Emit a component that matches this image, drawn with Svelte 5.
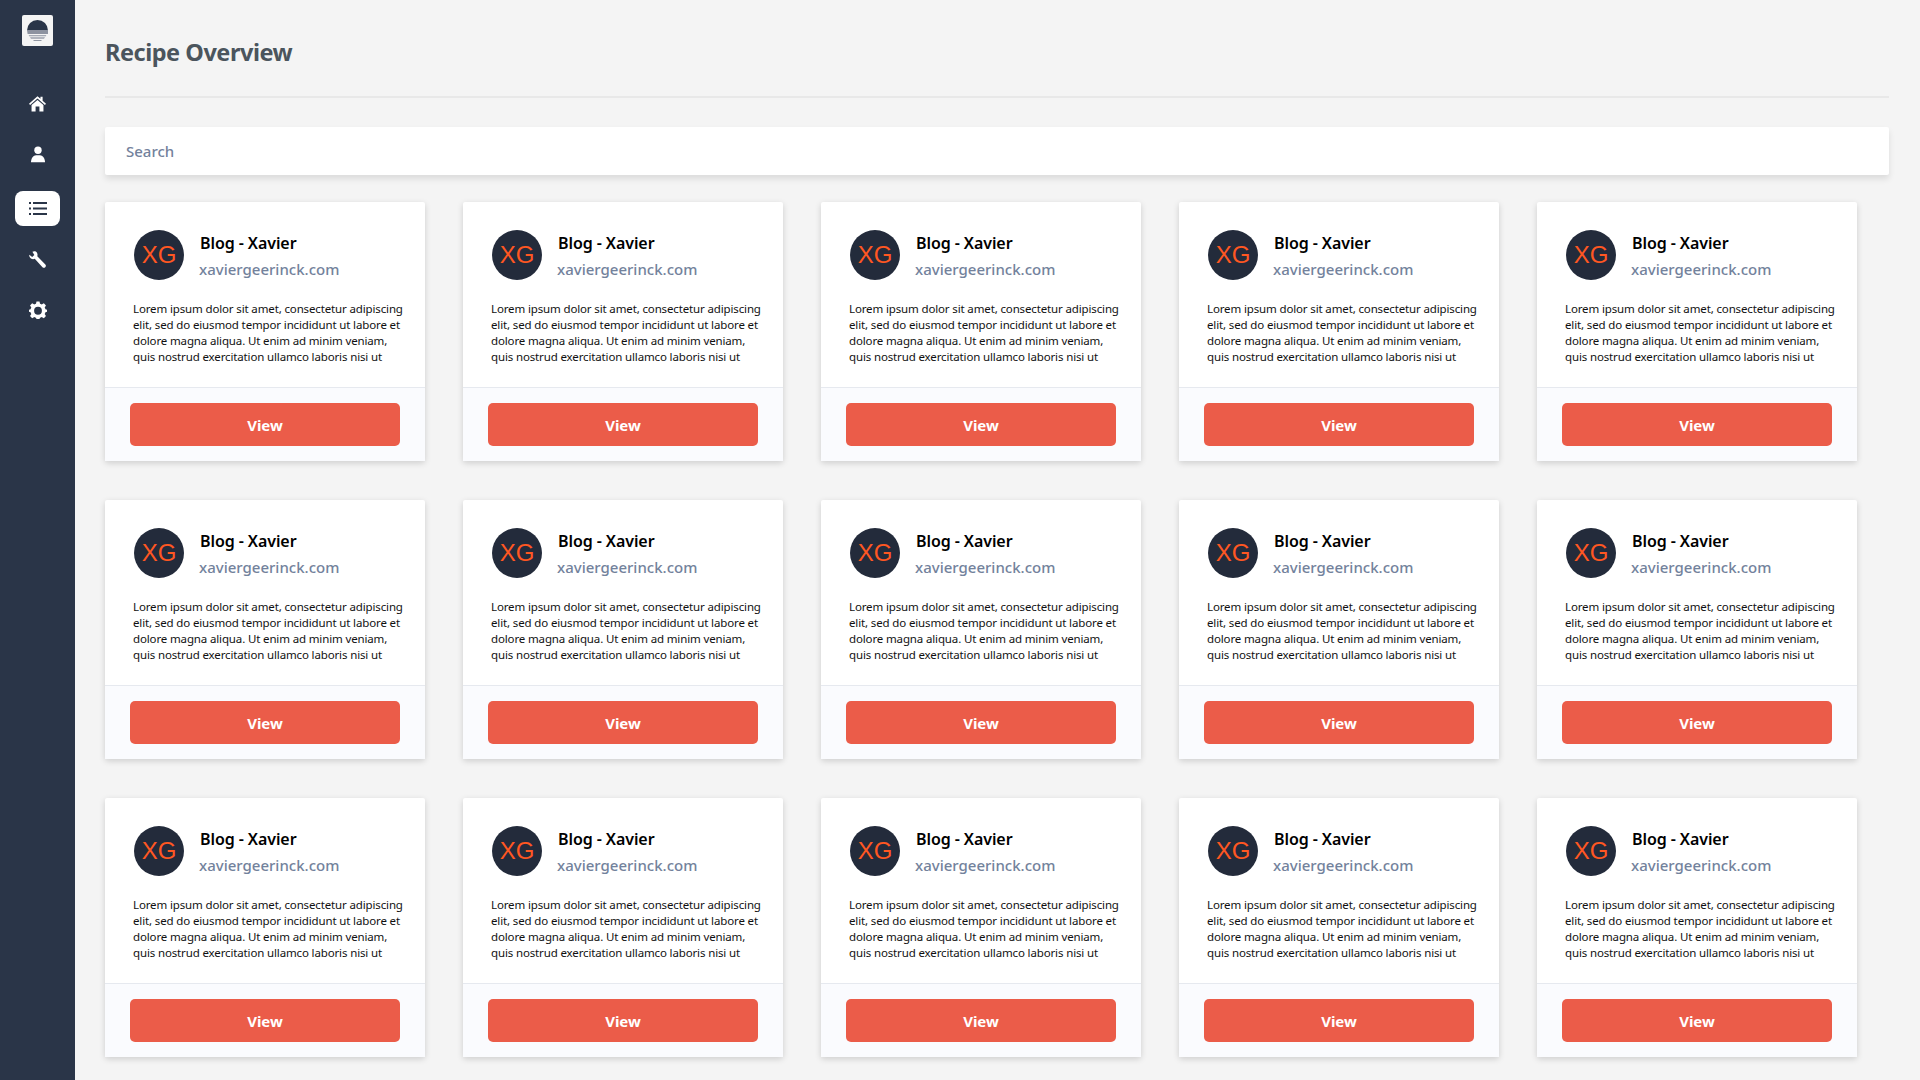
<script>
  const cards = Array.from({ length: 15 }, (_, i) => i);
</script>

<div class="layout">
  <nav class="sidebar">
    <div class="logo">
      <svg viewBox="0 0 21 21" width="21" height="21">
        <path d="M0 10.5 A10.5 10.5 0 0 1 21 10.5 Z" fill="#2a3548" />
        <path d="M0 10 H21 V14 H.6 Z" fill="#8d93a0" />
        <path d="M1.6 15.2 H19.4 L18.8 16.2 H2.2 Z" fill="#8d93a0" />
        <path d="M3 17.6 H18 L17 18.6 H4 Z" fill="#6f7787" />
        <path d="M6 20 H15 L14 20.8 H7 Z" fill="#6f7787" />
      </svg>
    </div>
    <a class="nav-item home" href="#home" aria-label="Home">
      <svg viewBox="0 0 16 16" width="17" height="17"><path fill="#fff" d="M8 1.2 L10.8 3.6 V1.6 H12.8 V5.4 L16 8.2 L15 9.4 L8 3.4 L1 9.4 L0 8.2 Z M2.4 9.4 L8 4.6 L13.6 9.4 V15.6 H9.8 V10.8 H6.2 V15.6 H2.4 Z" /></svg>
    </a>
    <a class="nav-item user" href="#user" aria-label="User">
      <svg viewBox="0 0 16 16" width="16" height="17"><circle fill="#fff" cx="8" cy="3.8" r="3.7" /><path fill="#fff" d="M1 15.8 C1 11.8 3.4 8.8 6 8.8 H10 C12.6 8.8 15 11.8 15 15.8 Z" /></svg>
    </a>
    <a class="nav-item active" href="#list" aria-label="Recipes">
      <svg viewBox="0 0 18 15" width="18" height="15"><g fill="#2a3548"><rect x="0" y="1" width="2" height="2" /><rect x="4" y="1" width="14" height="2" /><rect x="0" y="6.5" width="2" height="2" /><rect x="4" y="6.5" width="14" height="2" /><rect x="0" y="12" width="2" height="2" /><rect x="4" y="12" width="14" height="2" /></g></svg>
    </a>
    <a class="nav-item wrench" href="#tools" aria-label="Tools">
      <svg viewBox="0 0 16 16" width="17" height="17"><path fill="#fff" d="M0.3 3.6 L3 5.6 L5 3.8 L3.2 0.8 C5 -0.2 7 0.4 7.7 2 C8.2 3.2 8 4 7.8 4.9 L15.4 12.6 C16.2 13.5 16 14.6 15.3 15.3 C14.5 16 13.4 16 12.7 15.2 L5.4 7.4 C4.4 7.8 3 7.9 1.8 7 C0.6 6.2 0 5 0.3 3.6 Z" /></svg>
    </a>
    <a class="nav-item gear" href="#settings" aria-label="Settings">
      <svg viewBox="0 0 24 24" width="18" height="18"><path fill="#fff" fill-rule="evenodd" d="M10 0.5 H14 L14.7 3.7 C15.5 4 16.2 4.3 16.9 4.8 L19.8 3.1 L22.6 5.9 L20.9 8.8 C21.3 9.5 21.7 10.3 21.9 11.1 L24 11.7 V14.3 L21.9 14.9 C21.7 15.7 21.3 16.5 20.9 17.2 L22.6 20.1 L19.8 22.9 L16.9 21.2 C16.2 21.7 15.5 22 14.7 22.3 L14 24 H10 L9.3 22.3 C8.5 22 7.8 21.7 7.1 21.2 L4.2 22.9 L1.4 20.1 L3.1 17.2 C2.7 16.5 2.3 15.7 2.1 14.9 L0 14.3 V11.7 L2.1 11.1 C2.3 10.3 2.7 9.5 3.1 8.8 L1.4 5.9 L4.2 3.1 L7.1 4.8 C7.8 4.3 8.5 4 9.3 3.7 Z M12 7.8 A5.2 5.2 0 1 0 12 18.2 A5.2 5.2 0 1 0 12 7.8 Z" /></svg>
    </a>
  </nav>

  <main class="main">
    <h1>Recipe Overview</h1>
    <div class="search">Search</div>
    <div class="grid">
      {#each cards as c (c)}
        <article class="card">
          <div class="body">
            <header class="head">
              <div class="avatar">XG</div>
              <div class="who">
                <div class="name">Blog - Xavier</div>
                <div class="site">xaviergeerinck.com</div>
              </div>
            </header>
            <p>Lorem ipsum dolor sit amet, consectetur adipiscing<br />elit, sed do eiusmod tempor incididunt ut labore et<br />dolore magna aliqua. Ut enim ad minim veniam,<br />quis nostrud exercitation ullamco laboris nisi ut</p>
          </div>
          <footer class="foot"><button type="button">View</button></footer>
        </article>
      {/each}
    </div>
  </main>
</div>

<style>
  :global(body) {
    margin: 0;
    background: #f4f4f4;
    font-family: "Noto Sans", "Open Sans", sans-serif;
    overflow: hidden;
  }
  .layout {
    display: flex;
    height: 1080px;
    overflow: hidden;
  }
  .sidebar {
    width: 75px;
    flex: none;
    background: #2a3548;
    display: flex;
    flex-direction: column;
    align-items: center;
    padding-top: 15px;
    box-sizing: border-box;
  }
  .logo {
    width: 31px;
    height: 31px;
    background: #f4f4f4;
    border-radius: 2px;
    display: flex;
    align-items: center;
    justify-content: center;
    margin-bottom: 40px;
  }
  .nav-item {
    width: 45px;
    height: 35px;
    display: flex;
    align-items: center;
    justify-content: center;
    margin-bottom: 16px;
    border-radius: 8px;
  }
  .nav-item svg { display: block; }
  .nav-item.user { margin-bottom: 19px; }
  .nav-item.wrench { margin-bottom: 15px; }
  .nav-item.active { background: #fff; }
  .main {
    flex: 1;
    min-width: 0;
    padding: 0 31px 0 30px;
  }
  h1 {
    margin: 0;
    height: 96px;
    line-height: 104px;
    font-size: 23.5px;
    letter-spacing: -0.47px;
    font-weight: 700;
    color: #4b555d;
    border-bottom: 2px solid #e8e8e8;
  }
  .search {
    margin-top: 29px;
    height: 48px;
    line-height: 48px;
    padding-left: 21px;
    background: #fff;
    border-radius: 2px;
    font-size: 15px;
    font-weight: 500;
    color: #73829c;
    box-shadow: 0 4px 6px rgba(0, 0, 0, 0.1);
  }
  .grid {
    margin-top: 27px;
    display: grid;
    grid-template-columns: repeat(5, 320px);
    column-gap: 38px;
    row-gap: 39px;
  }
  .card {
    height: 259px;
    background: #fff;
    border-radius: 2px;
    box-shadow: 0 2px 6px rgba(0, 0, 0, 0.16);
    display: flex;
    flex-direction: column;
  }
  .body {
    height: 185px;
    padding: 28px 20px 0 28px;
    box-sizing: border-box;
  }
  .head {
    display: flex;
    gap: 16px;
    align-items: flex-start;
    margin-left: 1px;
  }
  .avatar {
    width: 50px;
    height: 50px;
    border-radius: 50%;
    background: #232b3b;
    color: #ff5722;
    font-family: "Liberation Sans", Arial, sans-serif;
    font-size: 24px;
    text-align: center;
    line-height: 50px;
    flex: none;
  }
  .name {
    font-size: 16px;
    letter-spacing: -0.08px;
    font-weight: 600;
    color: #000;
    line-height: 20px;
    margin-top: 3px;
  }
  .site {
    font-size: 15px;
    font-weight: 500;
    color: #73829c;
    line-height: 20px;
    margin-top: 6px;
    margin-left: -1px;
  }
  p {
    margin: 21px 0 0;
    font-size: 11.5px;
    letter-spacing: -0.14px;
    line-height: 16px;
    color: #111;
    white-space: nowrap;
  }
  .foot {
    flex: 1;
    background: #fafbfe;
    border-top: 1px solid #e6e9ef;
    padding: 15px 25px;
    box-sizing: border-box;
    margin: 0;
  }
  button {
    display: block;
    width: 270px;
    height: 43px;
    border: 0;
    padding: 0;
    border-radius: 5px;
    background: #eb5c49;
    color: #fff;
    font-family: inherit;
    font-size: 15px;
    line-height: 44px;
    font-weight: 700;
  }
</style>
